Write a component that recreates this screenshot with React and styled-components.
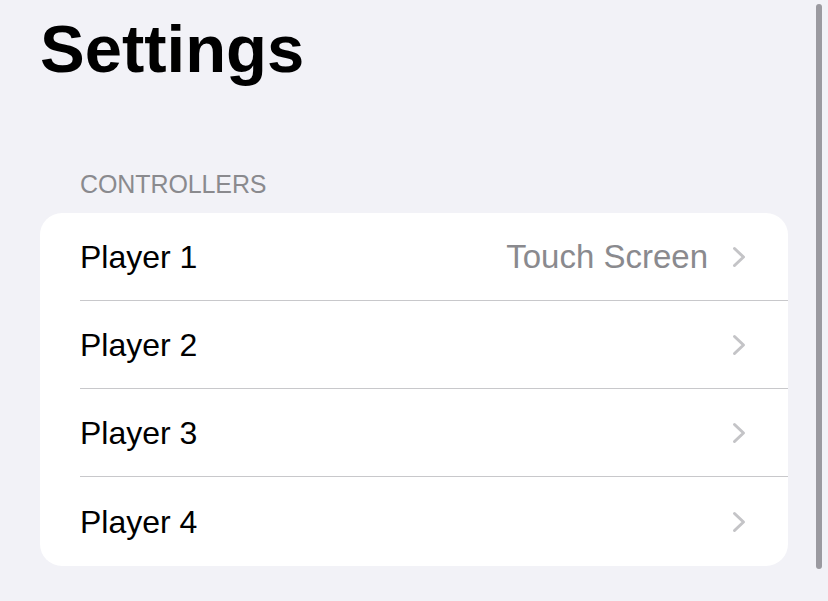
import React from 'react'
import styled, { createGlobalStyle } from 'styled-components'

const GlobalStyle = createGlobalStyle`
    html, body {
        margin: 0;
        padding: 0;
        background: #f2f2f7;
    }
    body {
        font-family: "Liberation Sans", Arial, sans-serif;
        -webkit-font-smoothing: antialiased;
    }
`;

const players = [
    { id: 1, name: 'Player 1', value: 'Touch Screen' },
    { id: 2, name: 'Player 2', value: '' },
    { id: 3, name: 'Player 3', value: '' },
    { id: 4, name: 'Player 4', value: '' },
];

function Chevron() {
    return (
        <svg width="14" height="22" viewBox="0 0 14 22">
            <polyline
                points="2.5,2.5 11.5,11 2.5,19.5"
                fill="none"
                stroke="#c4c4c7"
                strokeWidth="3"
                strokeLinecap="round"
                strokeLinejoin="round"
            />
        </svg>
    )
}

function App() {
    return (
        <>
            <GlobalStyle />
            <Page>
                <Title>Settings</Title>
                <SectionHeader>Controllers</SectionHeader>
                <Card>
                    {players.map((p, i) => (
                        <Row key={p.id}>
                            <RowInner $last={i === players.length - 1}>
                                <Label>{p.name}</Label>
                                <Value>{p.value}</Value>
                                <Chevron />
                            </RowInner>
                        </Row>
                    ))}
                </Card>
                <ScrollIndicator />
            </Page>
        </>
    )
}

const Page = styled.div`
    position: relative;
    width: 828px;
    height: 601px;
    overflow: hidden;
    background: #f2f2f7;
    display: flex;
    flex-direction: column;
`;

const Title = styled.h1`
    margin: 16px 0 0 40px;
    font-size: 67px;
    line-height: 66px;
    font-weight: 700;
    color: #000;
`;

const SectionHeader = styled.div`
    margin: 90px 0 16px 80px;
    font-size: 25px;
    line-height: 25px;
    letter-spacing: -0.1px;
    text-transform: uppercase;
    color: #8a8a8e;
`;

const Card = styled.div`
    margin-left: 40px;
    width: 748px;
    background: #fff;
    border-radius: 22px;
    overflow: hidden;
`;

const Row = styled.div`
    padding-left: 40px;
`;

const RowInner = styled.div`
    height: 88px;
    box-sizing: border-box;
    display: flex;
    align-items: center;
    padding-right: 42px;
    border-bottom: ${({ $last }) => ($last ? 'none' : '1px solid #c8c8cb')};
    ${({ $last }) => $last && 'height: 89px;'}
`;

const Label = styled.span`
    flex: 1;
    font-size: 32px;
    line-height: 88px;
    color: #000;
`;

const Value = styled.span`
    font-size: 33px;
    color: #8a8a8e;
    margin-right: 24px;
`;

const ScrollIndicator = styled.div`
    position: absolute;
    top: 4px;
    right: 6px;
    width: 6px;
    height: 565px;
    border-radius: 3px;
    background: #9b9aa0;
`;

export default App
